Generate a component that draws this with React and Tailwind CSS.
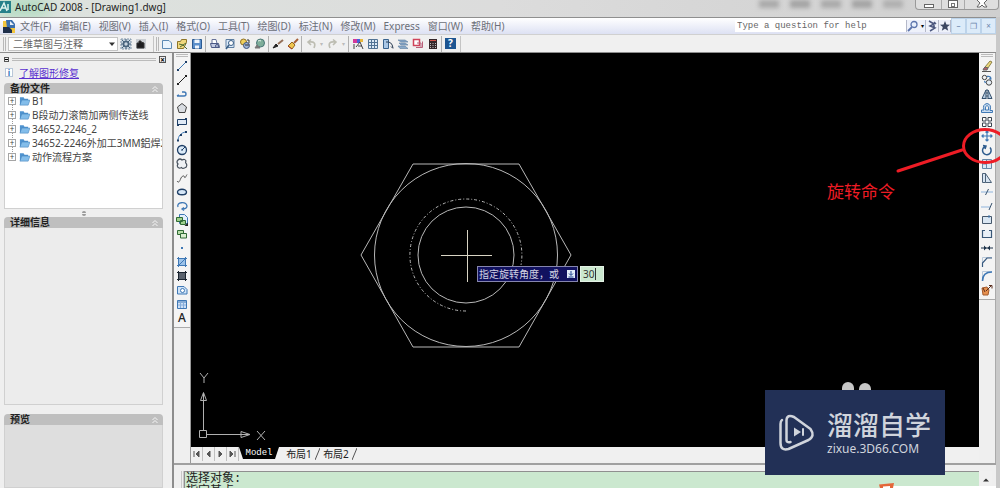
import { useState } from 'react';
import { clsx } from 'clsx';

const MENUS = ['文件(F)', '编辑(E)', '视图(V)', '插入(I)', '格式(O)', '工具(T)', '绘图(D)', '标注(N)', '修改(M)', 'Express', '窗口(W)', '帮助(H)'];

const BACKUPS = ['B1', 'B段动力滚筒加两侧传送线', '34652-2246_2', '34652-2246外加工3MM鋁焊2', '动作流程方案'];

const UI_FONT = "font-['Noto_Sans','Noto_Sans_CJK_SC',sans-serif]";
const MONO_FONT = "font-['Liberation_Mono','Noto_Sans_CJK_SC',monospace]";

const NAVY = '#1f3f66';
const BLUE = '#3f78b5';

// All glyphs are drawn on a 12x12 grid
const ICONS = {
  line: <><path d="M2 10 10 2" stroke={BLUE} /><path d="M1 9h2v2H1zM9 1h2v2H9z" fill={NAVY} stroke="none" /></>,
  xline: <><path d="M1 11 11 1" stroke="#222" /><path d="M1 9h2v2H1zM9 1h2v2H9z" fill="#222" stroke="none" /></>,
  pline: <path d="M1 8h7a2 2 0 0 0 0-4H6M1 8l2-1" stroke={BLUE} strokeWidth="1.4" />,
  polygon: <path d="M6 1.5 10.5 5 9 10.5H3L1.5 5z" fill="#d9dde2" stroke="#444" />,
  rectangle: <><path d="M1.5 3.5h9v5h-9z" fill="#dfe9f5" /><path d="M1 8h2v2H1zM9 2h2v2H9z" fill={NAVY} stroke="none" /></>,
  arc: <><path d="M2 11C2 6 5 2.500 10 2" stroke={BLUE} /><path d="M1 9.500h2v2H1zM4 4h2v2H4zM9 1h2v2H9z" fill={NAVY} stroke="none" /></>,
  circle: <><circle cx="6" cy="6" r="4.500" fill="#dcebf8" strokeWidth="1.3" /><path d="M6 6 9 3M5 6h2" /></>,
  cloud: <path d="M2 2q2-2 4 0 3-1.500 4 1-1 1.500.5 3 1 3-2 4-2 1-3-.5-3 1.500-4-1-.5-1.500.5-2.500Q0 4 2 2z" fill="#eef1f4" stroke="#46505c" strokeWidth="1.200" />,
  spline: <path d="M1 9c2 3 3-1 4-3s3-3 3.500-1S10 4 11 2.500" stroke="#555" />,
  ellipse: <ellipse cx="6" cy="6" rx="4.500" ry="2.800" fill="#d5e6f7" strokeWidth="1.4" />,
  ellipseArc: <path d="M2 7c-2-5 8-6 9-1 0 2-2 3-5 3M8 7.500 6 9l2 1.500" stroke={BLUE} strokeWidth="1.3" />,
  insert: <><path d="M3.500.500h5l3 3v6h-8z" fill="#e3effb" stroke={BLUE} /><path d="M.500 3.500h6v4h-6zM4.500 6.500h5v4h-5z" fill="#9fd08c" stroke="#2f6a35" /><path d="m8.500 12 3.500-3.500V12z" fill="#222" stroke="none" /></>,
  block: <><path d="M1.500 2.500h6v4h-6z" fill="#b9deaa" stroke="#2f6a35" /><path d="M4.500 5.500h6v4.500h-6z" fill="#d9efd0" stroke="#2f6a35" /></>,
  point: <path d="M5 5h2v2H5z" fill={BLUE} stroke="none" />,
  hatch: <><path d="M2.500 2.500h7v7h-7z" fill="#9cc3ea" stroke={BLUE} /><path d="M1 2.500h10M1 9.500h10M2.500 1v10M9.500 1v10M3 9l6-6" stroke={BLUE} /></>,
  gradient: <><path d="M2.500 2.500h7v7h-7z" fill="#59616c" stroke="#1c2530" /><path d="M1 2.500h10M1 9.500h10M2.500 1v10M9.500 1v10" stroke="#1c2530" /></>,
  region: <><path d="M1.500 10V2.500H8l3 3V10z" fill="#cfe3f7" stroke={BLUE} /><circle cx="6.500" cy="6.500" r="2" fill="#fff" stroke={BLUE} /></>,
  table: <><path d="M1.500 2.500h9v8h-9z" fill="#cfe0f5" stroke={BLUE} /><path d="M1.500 4h9" stroke={BLUE} /><path d="M4.500 4v6M7.500 4v6M2 7h8" stroke="#86aedb" /></>,

  erase: <><path d="m4 7 5-6 2 1-4 6z" fill="#ecd97a" stroke="#8c8048" /><path d="m3 8 1-1 3 1-1 2H2z" fill="#b5606a" stroke="#666" /><path d="M1 11.500h9" stroke="#555" /></>,
  copy: <><circle cx="3.500" cy="3.500" r="2.200" stroke="#444" /><circle cx="8" cy="8.500" r="2.700" fill="#e6eef5" stroke="#444" /><path d="M6 2.500q4-1 4 3M10 5.500 8.500 4M3.500 7l1 2" stroke={BLUE} strokeWidth="1.300" /></>,
  mirror: <><path d="M5 2v8.500H1zM7 2v8.500h4z" fill="#b8cce0" stroke="#35506c" /><path d="M6 1v10" stroke="#35506c" strokeDasharray="2 1" /></>,
  offset: <path d="M.500 10.500h11v-2H9q2-6-3-7-5 1-3 6.500H.500zM4.500 8q-1-4 1.500-4.500Q8.500 4 7.500 8z" fill="#c9ddf1" stroke={BLUE} />,
  array: <path d="M1.500 1.500h3.500V5H1.500zM7 1.500h3.500V5H7zM1.500 7h3.500v3.500H1.500zM7 7h3.500v3.500H7z" fill="#fff" stroke="#39434e" />,
  move: <path d="M1 6h10M6 1v10M4.500 2.500 6 1l1.500 1.500M4.500 9.500 6 11l1.500-1.500M2.500 4.500 1 6l1.500 1.500M9.500 4.500 11 6 9.500 7.500" stroke={BLUE} strokeWidth="1.200" />,
  rotate: <path d="M4 2.500a4.300 4.300 0 1 0 5 1M2 1.500l3 .5-1 3" stroke="#2e5c8e" strokeWidth="1.500" />,
  scale: <path d="M1.500 1.500h9v9h-9zM5.500 1.500v9M1.500 6h4" fill="#dbe8f5" stroke="#6688a8" />,
  stretch: <path d="M1.500 1.500h3v9h-3zM4.500 1.500l6 9h-6" fill="#d7e4f1" stroke="#4d6278" />,
  trim: <><path d="M0 6h12" stroke="#8fb4dc" /><path d="M4.500 9l3-6" stroke="#35506c" /></>,
  extend: <><path d="M0 7h9" stroke="#8fb4dc" /><path d="M8 10l3-7" stroke="#35506c" /></>,
  breakPoint: <><path d="M1.500 2.500h9v7h-9z" fill="#d9e6f2" stroke="#45586c" /><path d="M8 1v3" stroke={BLUE} /></>,
  break: <path d="M4 2.500H1.500v7h9v-7H8" fill="#eaf1f8" stroke="#3a5878" strokeWidth="1.200" />,
  join: <><path d="M0 6h12" stroke="#1c3148" /><path d="m3 3.500 2.500 2.500L3 8.500zM9 3.500 6.500 6 9 8.500z" fill="#1c3148" stroke="none" /></>,
  chamfer: <><path d="M1.500 11V1.500H11" stroke="#b9c9da" /><path d="M1.500 11V7L6 2h5" stroke="#385a80" strokeWidth="1.200" /></>,
  fillet: <><path d="M1.500 11V1.500H11" stroke="#b9c9da" /><path d="M1.500 11q0-9 9.500-9" stroke={BLUE} strokeWidth="1.600" /></>,
  explode: <><path d="m1 4 5-1 2 3-1 5H2z" fill="#e6904f" stroke="#a35a2c" /><path d="m5 7 5-5M8 1.500h3v3M2 4l2 4" stroke="#5b2e1e" /></>,

  gear: <><path d="M1 1h10v10H1z" fill="#c9d5e0" stroke="#7e93a8" strokeDasharray="2 1" /><circle cx="6" cy="6" r="2.500" stroke="#48637c" strokeWidth="1.600" /><path d="M6 1v2M6 9v2M1 6h2M9 6h2M2 2l2 2M8 8l2 2M10 2 8 4M2 10l2-2" stroke="#48637c" /></>,
  workspace: <><path d="M1 1h10v10H1z" fill="#c9cdd2" stroke="none" /><path d="M2 5h2V3h2v1l3 1v5H2z" fill="#1d1d1f" stroke="#333" /></>,
  newFile: <path d="M1.500 2.500H8l2.500 2.500v5.500h-9z" fill="#eaf4fd" stroke="#5d8ab4" />,
  open: <><path d="M1.500 3.500h3l1-2h5v3l-3 6h-6z" fill="#f0d77c" stroke="#8e7528" /><path d="m4 9 6-4M3 6l4 1 4 4" stroke="#4d6b33" /></>,
  save: <><path d="M1.500 1.500h9v9h-9z" fill="#5b8fcb" stroke="#2c5a92" /><path d="M3.500 1.500h5V5h-5zM4 7.500h4v3H4z" fill="#eef5fc" stroke="none" /></>,
  plot: <><path d="M3 1.500h4l1 4H3z" fill="#fff" stroke="#68739a" /><path d="M1.500 5.500h8l1 4h-8z" fill="#c3cbe2" stroke="#4b5885" /><circle cx="8" cy="8" r="1.500" stroke="#4b5885" /></>,
  preview: <><path d="M2 1.500h8v8H2z" fill="#dbe9f7" stroke="#5f7fa2" /><circle cx="7" cy="5" r="2.500" fill="#fff" stroke="#3a5f86" /><path d="m5 7-3 4" stroke="#3a5f86" strokeWidth="1.500" /></>,
  publish: <><circle cx="4.500" cy="4" r="3" fill="#f0cf5a" stroke="#8f7126" /><circle cx="7.500" cy="7.500" r="3" fill="#9db3d8" stroke="#3c517c" /><path d="M6 7h4M8 2h2v3" stroke="#333" /></>,
  globe: <><circle cx="6.500" cy="5" r="4" fill="#7fae9a" stroke="#4a7777" /><path d="M4 3q2-1 3 0" stroke="#e8f6ee" /><path d="m3 7-2 3 5 0z" fill="#777" stroke="#777" /></>,
  brush: <><path d="m6 6 5-4" stroke="#94705a" strokeWidth="2" /><path d="m1 10 3-4 2 2z" fill="#222" stroke="#222" /></>,
  match: <><path d="m7 5 4-4" stroke="#a65f37" strokeWidth="2" /><path d="m5 4 3 3-3 4-4-3z" fill="#efc64e" stroke="#94661f" /><path d="m1 8 4 3" stroke="#a43a2a" /></>,
  undo: <path d="M9 10q3-7-5-6M6 1.500 3 4l3 3" stroke="#bdbdb2" strokeWidth="1.600" />,
  redo: <path d="M3 10Q0 3 8 4M6 1.500 9 4 6 7" stroke="#bdbdb2" strokeWidth="1.600" />,
  properties: <><path d="M1 1h4v4H1z" fill="#d43a9a" stroke="none" /><path d="M5 1h3v4H5z" fill="#4a61d8" stroke="none" /><path d="M8 1h3v3H8z" fill="#e8b83c" stroke="none" /><path d="M2 6v5M4 9l4-5 3 7M6 8h4" stroke="#444" /></>,
  center: <path d="M1.500 1.500h9v9h-9zM4.500 2v8M7.500 2v8M2 4.500h8M2 7.500h8" fill="#dce9f5" stroke="#527394" />,
  palette: <><path d="M1.500 1.500h5v9h-5z" fill="#a9c7e6" stroke="#38628d" /><path d="M4 4q6-1 7 6M9 8.500l2 2" stroke="#2d3f55" /></>,
  sheets: <path d="m1 2 7 0 3 2H4zM2 5h6l3 2H4zM1 8h7l3 2.500H3z" fill="#89a9c9" stroke="#5a7c9e" strokeWidth=".6" />,
  markup: <><path d="M1.500 1.500h6v6h-6z" fill="#fff" stroke="#d0445a" strokeWidth="1.500" /><path d="M4 9.500h6.500v-6M5 5h4v4" stroke="#b8607a" /></>,
  calc: <><path d="M2 1h8v10H2z" fill="#35272a" stroke="none" /><path d="M3 2.500h6" stroke="#d3544a" /><path d="M3.500 5v5M6 5v5M8.500 5v5" stroke="#bbb" strokeDasharray="1 1" /></>,
  search: <><circle cx="7" cy="4.500" r="3" fill="#e8effb" stroke="#5c74ac" strokeWidth="1.300" /><path d="m5 7-4 4" stroke="#5c74ac" strokeWidth="1.800" /></>,
  comm: <path d="m3 1 5 3-4 2 5 2-5 3M8 2l2 2M9 6H7" stroke="#4d5980" strokeWidth="1.500" />,
  star: <path d="m6 1 1.400 3.500 3.600.2-2.800 2.300 1 3.700L6 8.700l-3.200 2 1-3.700L1 4.700l3.600-.2z" fill="#3d4863" stroke="none" />,
};

const DRAW_TOOLS = [
  ['line', '直线'], ['xline', '构造线'], ['pline', '多段线'], ['polygon', '正多边形'], ['rectangle', '矩形'],
  ['arc', '圆弧'], ['circle', '圆'], ['cloud', '修订云线'], ['spline', '样条曲线'], ['ellipse', '椭圆'],
  ['ellipseArc', '椭圆弧'], ['insert', '插入块'], ['block', '创建块'], ['point', '点'], ['hatch', '图案填充'],
  ['gradient', '渐变色'], ['region', '面域'], ['table', '表格'], ['text', '多行文字'],
];

const MODIFY_TOOLS = [
  ['erase', '删除'], ['copy', '复制'], ['mirror', '镜像'], ['offset', '偏移'], ['array', '阵列'], ['move', '移动'],
  ['rotate', '旋转'], ['scale', '缩放'], ['stretch', '拉伸'], ['trim', '修剪'], ['extend', '延伸'],
  ['breakPoint', '打断于点'], ['break', '打断'], ['join', '合并'], ['chamfer', '倒角'], ['fillet', '圆角'], ['explode', '分解'],
];

const STANDARD_GROUPS = [
  [['newFile', '新建'], ['open', '打开'], ['save', '保存']],
  [['plot', '打印'], ['preview', '打印预览'], ['publish', '发布'], ['globe', '三维 DWF']],
  [['brush', '剪切'], ['match', '特性匹配']],
  [['undo', '放弃'], ['undoMenu', '放弃列表'], ['redo', '重做'], ['redoMenu', '重做列表']],
  [['properties', '特性'], ['center', '设计中心'], ['palette', '工具选项板'], ['sheets', '图纸集'], ['markup', '标记集'], ['calc', '计算器']],
  [['help', '帮助']],
];

const Icon = ({ name }) => (
  <svg viewBox="0 0 12 12" className="size-3 shrink-0" fill="none" stroke={NAVY} strokeWidth="1" aria-hidden="true">
    {ICONS[name]}
  </svg>
);

const ToolButton = ({ name, label, className }) => {
  let face = <Icon name={name} />;
  if (name === 'text') face = <span className="text-xs leading-3 font-medium text-[#222]">A</span>;
  if (name === 'help') face = <span className="size-[11px] bg-[#1d5591] text-white text-[10px] leading-[11px] font-bold">?</span>;
  if (name.endsWith('Menu')) face = <span className="text-[6px] leading-3 text-[#bbb]">▾</span>;
  return (
    <button type="button" aria-label={label} title={label} className={clsx('flex items-center justify-center shrink-0 hover:bg-[#c8dcf0]', className)}>
      {face}
    </button>
  );
};

const Grip = () => <span className="w-[3px] h-3.5 border-x border-[#b8b8b8] shrink-0" />;

const TitleBar = () => (
  <header className="relative h-[17px] shrink-0 flex items-start bg-linear-to-r from-[#dde3de] via-[#dcdcdc] to-[#cfcfcf] overflow-hidden">
    <span className="absolute left-0 top-0 w-12 h-4 bg-[#86d4a4] opacity-60 blur-sm" />
    <svg viewBox="0 0 11 12" className="relative w-[11px] h-3 mt-px shrink-0" aria-hidden="true">
      <path d="M0 0h11v12H0z" fill="#27818a" />
      <path d="M0 10 4 2l3 8M1 7h5M8 3v6" fill="none" stroke="#dff3ee" strokeWidth="1.500" />
    </svg>
    <h1 className="relative ml-1 text-[10px] leading-3.5 text-[#222] whitespace-nowrap">
      AutoCAD 2008 - [Drawing1.dwg]
    </h1>
    <div className="ml-auto flex gap-[11px] mr-3 blur-[2px]" aria-hidden="true">
      <span className="w-5 h-2 bg-[#aaa]" />
      <span className="w-5 h-2 bg-[#a4a4a4]" />
      <span className="w-5 h-2 bg-[#aaa]" />
      <span className="w-5 h-2 bg-[#a4a4a4]" />
      <span className="w-5 h-2 bg-[#b0b0b0]" />
    </div>
    <div className="flex h-2.5 mr-px border border-t-0 border-[#999] rounded-b-sm bg-[#dedede]">
      <button type="button" aria-label="最小化" className="w-[26px] flex justify-center items-start pt-1 border-r border-[#aaa]">
        <span className="w-2.5 h-1 border border-[#666] bg-white" />
      </button>
      <button type="button" aria-label="最大化" className="w-[23px] flex justify-center items-start border-r border-[#aaa]">
        <span className="w-2.5 h-2 border border-[#666] bg-white p-0.5"><span className="block h-1 border border-[#777]" /></span>
      </button>
      <button type="button" aria-label="关闭" className="w-[33px] flex justify-center items-start">
        <svg viewBox="0 0 12 8" className="w-3 h-2" aria-hidden="true">
          <path d="m1 0 3 3-3 4h3l2-2 2 2h3L8 3l3-3" fill="#fff" stroke="#666" />
        </svg>
      </button>
    </div>
  </header>
);

const MenuBar = () => (
  <nav className="h-[17px] shrink-0 flex items-center border-t border-[#8f8f8f] bg-linear-to-b from-white to-[#dde1f3]">
    <svg viewBox="0 0 13 13" className="w-[13px] h-[13px] ml-[3px] mr-1 shrink-0" aria-hidden="true">
      <path d="M0 1h7l5 4v8H0z" fill="#f2c53d" />
      <path d="M3 0h6l3 4v4H4z" fill="#3b6fae" />
      <path d="M0 7h6l3 3v3H0z" fill="#1e2f4a" />
      <path d="M7 1v4h4" fill="#e9f0f8" />
    </svg>
    <div className="flex gap-2 text-[10px] leading-4 text-[#6c6f78]">
      {MENUS.map((m) => (
        <button key={m} type="button" className="whitespace-nowrap hover:text-black">{m}</button>
      ))}
    </div>
    <input
      type="text"
      aria-label="Help search"
      placeholder="Type a question for help"
      className={clsx('ml-auto w-[171px] h-3 bg-white text-[9px] leading-3 px-0.5 placeholder:text-[#666] outline-none', MONO_FONT)}
    />
    <div className="flex h-3 bg-[#eef1fa] border-x border-[#b5b9c9]">
      <ToolButton name="search" label="搜索" className="w-3" />
      <button type="button" aria-label="搜索选项" className="w-[7px] text-[6px] leading-3 border-r border-[#b5b9c9]">▾</button>
      <ToolButton name="comm" label="通讯中心" className="w-3" />
      <ToolButton name="star" label="收藏夹" className="w-3 border-l border-[#b5b9c9]" />
    </div>
    <div className="flex h-4 text-[8px] leading-3.5 text-[#6d86ad]">
      {[['最小化图形', '–'], ['还原图形', '❐'], ['关闭图形', '×']].map(([label, sign]) => (
        <button key={label} type="button" aria-label={label} className="w-[15px] border border-[#bcd3ea] bg-[#dcebf9]">{sign}</button>
      ))}
    </div>
  </nav>
);

const StandardToolbar = () => (
  <div className="h-[18px] shrink-0 flex items-center bg-[#f0f0f0] border-t border-[#d0d0d0]">
    <div className="flex items-center pl-[3px]">
      <Grip />
      <select aria-label="工作空间" className="appearance-none ml-0.5 w-[110px] h-3.5 pl-1 border border-[#c4c4c4] bg-white text-[10px] leading-3 text-[#666]">
        <option>二维草图与注释</option>
      </select>
      <svg viewBox="0 0 8 8" className="-ml-2.5 mr-0.5 size-2 pointer-events-none" fill="#333" aria-hidden="true"><path d="M1 2.500h6L4 6z" /></svg>
      <ToolButton name="gear" label="工作空间设置" className="w-[15px] h-4" />
      <ToolButton name="workspace" label="我的工作空间" className="w-[15px] h-4" />
    </div>
    <div className="flex items-center ml-[5px] pr-0.5 border-x border-[#c4c4c4]">
      <span className="ml-0.5 flex"><Grip /></span>
      {STANDARD_GROUPS.map((group, i) => (
        <div key={i} className={clsx('flex', i > 0 && 'ml-px pl-px border-l border-[#b0b0b0]')}>
          {group.map(([name, label]) => (
            <ToolButton key={name} name={name} label={label} className={name.endsWith('Menu') ? 'w-[7px] h-4' : 'w-[15px] h-4'} />
          ))}
        </div>
      ))}
    </div>
  </div>
);

const Section = ({ title, className, bodyClass, children }) => (
  <section className={clsx('flex flex-col', className)}>
    <h2 className="h-[11px] shrink-0 flex items-center justify-between pl-1.5 pr-1 rounded-t-sm bg-[#bfbfbf] text-[10px] leading-[11px] font-bold text-[#222]">
      {title}
      <button type="button" aria-label={`折叠${title}`} className="h-2.5">
        <svg viewBox="0 0 8 8" className="size-2" fill="none" stroke="#f6f6f6" aria-hidden="true">
          <path d="m1.500 4 2.500-2.500L6.500 4M1.500 7 4 4.500 6.500 7" />
        </svg>
      </button>
    </h2>
    <div className={clsx('grow border border-t-0 border-[#d0d0d0] overflow-hidden', bodyClass)}>{children}</div>
  </section>
);

const RecoveryPanel = () => (
  <aside className="w-[172px] shrink-0 flex flex-col pl-1 pr-[9px] bg-[#efefef] overflow-hidden">
    <div className="h-3 shrink-0 -mr-[3px] flex items-center gap-[3px]">
      <button type="button" aria-label="最小化面板" className="size-[5px] border border-[#555] flex items-center"><span className="w-full h-px bg-black" /></button>
      <span className="grow h-[3px] border-y border-[#bbb]" />
      <button type="button" aria-label="关闭面板" className="size-[7px] border border-[#555] text-[8px] leading-[5px] font-bold">×</button>
    </div>
    <p className="h-[15px] shrink-0 flex items-center gap-1">
      <span className="w-2 h-[9px] border border-[#b9c7d8] bg-white text-[8px] leading-[8px] text-center text-[#2f6fb8] font-bold ml-px">i</span>
      <a href="#recovery" className="ml-0.5 text-[10px] leading-3 text-[#5a2fd0] underline">了解图形修复</a>
    </p>
    <Section title="备份文件" className="h-[126px] shrink-0 mt-[3px]" bodyClass="bg-white">
      <ul className="relative pl-[3px]">
        <span className="absolute left-[7px] top-2 h-14 border-l border-dotted border-[#999]" />
        {BACKUPS.map((name) => (
          <li key={name} className="relative h-3.5 flex items-center text-[10px] leading-3.5 text-[#444] whitespace-nowrap">
            <button type="button" aria-label={`展开 ${name}`} className="size-2 shrink-0 flex items-center justify-center border border-[#a5a5a5] bg-white text-[8px] leading-[6px]">+</button>
            <svg viewBox="0 0 12 10" className="w-[11px] h-2.5 ml-[3px] mr-0.5 shrink-0" aria-hidden="true">
              <path d="M1 1h4l1 1.500h4V9H1z" fill="#4f93cf" />
              <path d="M3 4h9l-2 5.500H1z" fill="#83bdea" stroke="#3c7ab4" strokeWidth=".5" />
            </svg>
            <span>{name}</span>
          </li>
        ))}
      </ul>
    </Section>
    <div className="h-2 shrink-0 flex flex-col items-center justify-center gap-px" aria-hidden="true">
      <span className="w-1 h-0.5 rounded-t-full bg-[#999]" />
      <span className="w-1 h-0.5 rounded-b-full bg-[#999]" />
    </div>
    <Section title="详细信息" className="h-[188px] shrink-0" bodyClass="bg-[#ececec]" />
    <Section title="预览" className="grow mt-[9px]" bodyClass="bg-[#dedede]" />
  </aside>
);

const ToolStrip = ({ tools, label, className }) => (
  <div role="toolbar" aria-label={label} className={clsx('shrink-0 bg-[#efefef]', className)}>
    <div className="flex flex-col items-center pb-0.5 border-b border-[#aaa] bg-[#f4f4f4]">
      <span className="w-3 h-[3px] mt-px mb-0.5 border-y border-[#bbb]" />
      {tools.map(([name, title]) => (
        <ToolButton key={name} name={name} label={title} className="w-4 h-3.5" />
      ))}
    </div>
  </div>
);

const DynamicPrompt = () => {
  const [angle, setAngle] = useState('30');
  return (
    <div className="absolute left-[286px] top-[213px] flex items-stretch gap-0.5 h-4 text-[10px] leading-3.5">
      <label htmlFor="angle" className="w-[101px] flex items-center justify-between pl-px pr-0.5 border border-[#8585ad] bg-[#11115f] text-[#d3d3e4] whitespace-nowrap">
        指定旋转角度，或
        <svg viewBox="0 0 8 8" className="size-2 shrink-0" aria-hidden="true">
          <path d="M0 0h8v8H0z" fill="#e3ecfa" />
          <path d="M4 1v4M2 3.500l2 2 2-2M1.500 7h5" fill="none" stroke="#1b3f8c" />
        </svg>
      </label>
      <div className="relative flex">
        <input
          id="angle"
          type="text"
          value={angle}
          onChange={(e) => setAngle(e.target.value)}
          className="peer w-6 px-0.5 border border-[#e4f2e6] bg-[#cbe8cf] text-[10px] text-[#333] outline-none"
        />
        <span className="absolute left-[15px] top-0.5 w-px h-3 bg-[#333] peer-focus:hidden" />
      </div>
    </div>
  );
};

const Canvas = () => (
  <div className="relative grow bg-black overflow-hidden">
    <svg className="absolute left-0 top-0 w-[600px] h-[395px]" fill="none" stroke="#b8b8b8" aria-label="六角螺母">
      <path d="M170 202 222 111H328L380 202 328 294H222z" />
      <circle cx="275" cy="202" r="91.500" />
      <circle cx="275" cy="202" r="48" />
      <path d="M275 258A56 56 0 1 1 330 212" strokeDasharray="3 2 1 2" />
      <path d="M250 202.500h51M276.500 177v52" stroke="#d8d4c4" />
    </svg>
    <svg viewBox="0 0 80 80" className="absolute left-0 bottom-0 size-20" fill="none" stroke="#b0b0b0" aria-label="UCS">
      <path d="M8.500 63.500h7v7h-7zM12.500 63V26M16 67.500h42M9.500 33.500l3-8 3 8zM50 64.500l9 3-9 3z" />
      <path d="M9 6l4 5 4-5M13 11v5M66 64l8 9M74 64l-8 9" />
    </svg>
    <DynamicPrompt />
    <span className="absolute right-[108px] bottom-[50px] w-3 h-[14px] rounded-full bg-[#c6c6c6]" />
    <span className="absolute right-[125px] bottom-[51px] w-3 h-[14px] rounded-full bg-[#c6c6c6]" />
  </div>
);

const LayoutTabs = () => (
  <div className="h-[14px] shrink-0 flex items-stretch bg-[#f0f0f0] text-[10px] leading-[13px] text-[#222]">
    {[['首页', 'M3 2v6M8 2 5 5l3 3z'], ['上一个', 'M7 2 4 5l3 3z'], ['下一个', 'M4 2l3 3-3 3z'], ['末页', 'M3 2l3 3-3 3zM8 2v6']].map(([label, d]) => (
      <button key={label} type="button" aria-label={label} className="w-3 flex items-center justify-center border-r border-[#c0c0c0]">
        <svg viewBox="0 0 11 10" className="w-[11px] h-2.5" fill="#555" stroke="#555" aria-hidden="true"><path d={d} /></svg>
      </button>
    ))}
    <button type="button" className={clsx('w-10 mr-1 h-3 bg-black text-white text-[9px] leading-3 [clip-path:polygon(0_0,100%_0,90%_100%,10%_100%)]', MONO_FONT)}>
      Model
    </button>
    {['布局1', '布局2'].map((name) => (
      <button key={name} type="button" className="w-[37px] flex items-center justify-between whitespace-nowrap">
        <span className="grow">{name}</span>
        <svg viewBox="0 0 5 12" className="w-[5px] h-3" fill="none" stroke="#555" aria-hidden="true"><path d="M5 0 0 12" /></svg>
      </button>
    ))}
  </div>
);

const CommandLine = () => (
  <footer className="relative h-[25px] shrink-0 flex pl-[7px] pt-1.5 border-t-2 border-[#a0a0a0] bg-[#efefef] overflow-hidden">
    <span className="w-[3px] border-x border-[#c8c8c8]" />
    <div className={clsx('grow border-l border-t border-[#8f8f8f] bg-[#cbe8cf] pl-px pt-px text-xs leading-[13px] text-[#222]', MONO_FONT)}>
      <p>选择对象:</p>
      <p>指定基点:</p>
    </div>
    <button type="button" aria-label="向上滚动" className="w-[13px] mr-1 flex justify-center items-center bg-[#f0f0f0]">
      <svg viewBox="0 0 8 8" className="size-2" fill="#333" aria-hidden="true"><path d="M1 5.500h6L4 2.500z" /></svg>
    </button>
    <span className="absolute right-0 bottom-0 w-[103px] h-0.5 bg-white" />
    <svg viewBox="0 0 16 5" className="absolute right-[101px] bottom-0 w-4 h-[5px]" aria-hidden="true">
      <path d="M0 1.500 15 0l-1 5H1z" fill="#e4673a" />
      <path d="M4 3.500 11 3v2H4z" fill="#fff" />
    </svg>
  </footer>
);

const RotateNote = () => (
  <div className="absolute -right-1 top-[69px] w-[173px] h-24 pointer-events-none">
    <svg className="absolute inset-0 w-full h-full" fill="none" stroke="#ee1c25" strokeWidth="3" aria-hidden="true">
      <path d="M71 49 135 28" strokeLinecap="round" />
      <ellipse cx="158" cy="24" rx="21.500" ry="16.500" />
    </svg>
    <p className="absolute left-0 top-[58px] text-[17px] leading-6 text-[#ee1c25] whitespace-nowrap">旋转命令</p>
  </div>
);

const Watermark = () => (
  <div className="absolute right-[55px] bottom-[13px] w-[180px] h-[85px] flex items-center pl-3.5 gap-3 bg-[#223056] text-[#d0d4dc]">
    <svg viewBox="0 0 36 38" className="w-9 h-[38px] shrink-0" fill="none" stroke="currentColor" strokeWidth="2.500" strokeLinecap="round" strokeLinejoin="round" aria-hidden="true">
      <path d="M3 6q-1.500 1-1.500 4v19q0 8 8 6l20-9q7-4 2-11L15 3Q8 0 7.500 6v20q0 3 4 2" />
      <path d="m15 13.500 7 4.500-7 4.500z" fill="currentColor" stroke="none" />
      <path d="M24 15v6" strokeWidth="2" />
    </svg>
    <div className="flex flex-col items-start gap-1">
      <p className="text-[26px] leading-7 font-medium whitespace-nowrap">溜溜自学</p>
      <p className="text-xs leading-3 whitespace-nowrap">zixue.3D66.COM</p>
    </div>
  </div>
);

export default function App() {
  return (
    <div className={clsx('relative h-screen flex flex-col bg-[#efefef] overflow-hidden', UI_FONT)}>
      <TitleBar />
      <div className="grow min-h-0 flex flex-col border-r-4 border-[#c9c9c9]">
        <MenuBar />
        <StandardToolbar />
        <main className="relative grow min-h-0 flex border-t border-[#8d8d8d]">
          <RecoveryPanel />
          <div className="grow min-w-0 flex flex-col border-l-2 border-[#8d8d8d]">
            <div className="grow min-h-0 flex">
              <ToolStrip tools={DRAW_TOOLS} label="绘图" className="w-[17px] border-r border-[#999]" />
              <div className="grow min-w-0 flex flex-col">
                <Canvas />
                <LayoutTabs />
                <div className="h-0.5 shrink-0" />
              </div>
              <ToolStrip tools={MODIFY_TOOLS} label="修改" className="w-[17px] border-r border-[#aaa]" />
            </div>
            <CommandLine />
          </div>
          <RotateNote />
        </main>
      </div>
      <Watermark />
    </div>
  );
}
